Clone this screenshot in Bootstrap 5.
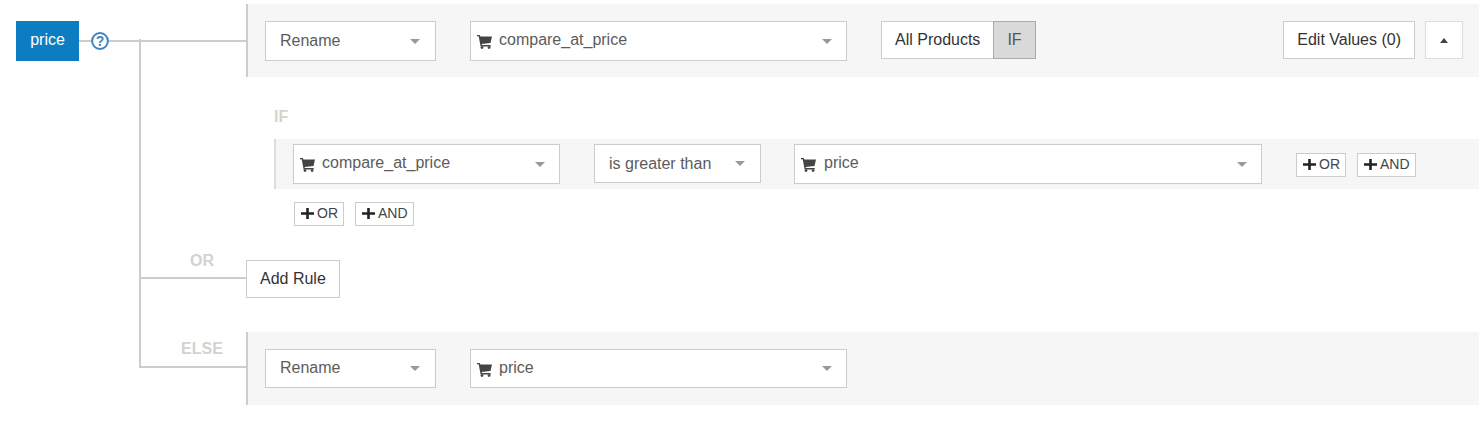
<!DOCTYPE html>
<html lang="en">
<head>
<meta charset="utf-8">
<title>Rule builder</title>
<link href="https://cdn.jsdelivr.net/npm/bootstrap@5.3.0/dist/css/bootstrap.min.css" rel="stylesheet">
<style>
html,body{height:427px;overflow:hidden;background:#fff}
body{font-family:"Liberation Sans",Arial,sans-serif;font-size:16px;color:#555}
.tree{position:relative;padding-top:4px}
.tree::before{content:"";position:absolute;left:139px;top:39px;width:2px;height:329px;background:#ccc}
.gutter{width:246px;flex:none}
.band{background:#f6f6f6;border-left:2px solid #ccc;flex:1 1 auto;min-width:0}
.top-band,.else-band{height:73px;padding:17px 16px 0 17px}
.head-cell{padding:17px 0 0 16px;height:57px}
.field-pill{width:63px;height:40px;background:#0d7dc1;color:#fff;line-height:38px;text-align:center}
.wire{height:2px;background:#ccc;flex:none}
.wire-a{width:12px}
.wire-b{flex:1 1 auto}
.help-mark{display:block;width:18px;height:18px;flex:none}
.pick{height:40px;background:#fff;border:1px solid #ccc;border-radius:0;padding:0 15px 0 14px;color:#5c5c5c;font-size:16px;line-height:1;text-align:left}
.pick:hover,.pick:active{background:#fff!important;color:#5c5c5c!important;border-color:#ccc!important}
.pick-icon{padding-left:6px;padding-right:14px;padding-bottom:2px}
.pick-short{height:39px}
.w171{width:171px}.w377{width:377px}.w267{width:267px}.w167{width:167px}.w468{width:468px}
.tri{display:block;width:0;height:0;border-left:5px solid transparent;border-right:5px solid transparent;border-top:5px solid #999;margin-left:auto;flex:none}
.pick-icon .tri{position:relative;top:1px}
.cart{display:block;width:15px;height:14px;margin:4px 7px 0 0;flex:none;fill:#444}
.cart-wide{margin-right:8px}
.act{height:38px;background:#fff;border:1px solid #ccc;border-radius:0;color:#333;font-size:16px;padding:0 13px;line-height:1}
.act.on{background:#d9d9d9;border-color:#aaa;color:#555}
.act:hover{background:#fff;color:#333;border-color:#ccc}
.act.on:hover{background:#d9d9d9;color:#555;border-color:#aaa}
.act-sq{width:38px;padding:0;margin-left:10px;border-color:#ddd}
.act-sq:hover{border-color:#ddd}
.tri-up{display:block;width:0;height:0;margin:0 auto;border-left:4.5px solid transparent;border-right:4.5px solid transparent;border-bottom:5px solid #444}
.gap-34{margin-left:34px}
.gap-33{margin-left:33px}
.cond{margin-left:274px;height:173px}
.if-label{height:62px;padding-top:30px;font-weight:700;color:#d4d4cb;line-height:20px}
.cond-band{height:50px;padding:5px 0 0 17px;border-left-color:#ddd}
.mini{height:24px;background:#fff;border:1px solid #ccc;border-radius:0;padding:0 5px 2px 6px;font-size:14px;line-height:1;color:#444}
.mini:hover{background:#fff;color:#444;border-color:#ccc}
.mini svg{display:block;width:13px;height:11px;margin:1px 3px 0 0;fill:#222}
.mini+.mini{margin-left:11px}
.mini-in{margin:9px 0 0 34px}
.mini-out{margin:13px 0 0 20px}
.or-row{height:48px}
.stub-or{margin-left:140px;height:29px;border-bottom:2px solid #ccc;width:106px;padding:1px 0 0 18px;text-align:center;color:#d2d2d2;font-weight:700;line-height:20px}
.add-rule{height:38px;background:#fff;border:1px solid #ccc;border-radius:0;padding:0 13px;color:#333;font-size:16px;line-height:1;margin-top:10px}
.add-rule:hover{background:#fff;color:#333;border-color:#ccc}
.else-row{margin-top:34px}
.else-band .pick{height:39px;padding-bottom:2px}
.else-band .tri{position:relative;top:1px}
.stub-else{margin-left:140px;height:36px;border-bottom:2px solid #ccc;width:106px;padding:7px 0 0 18px;text-align:center;color:#d2d2d2;font-weight:700;line-height:20px}
</style>
</head>
<body class="m-0">
<svg width="0" height="0" class="d-block position-absolute" aria-hidden="true">
  <symbol id="i-cart" viewBox="0 0 15 14"><path d="M0 0h2.8l.6 1.6H15l-1.5 6.3-8.9 1 .3 1.2h8.8v1.3H3.6L1.7 1.3H0z"/><circle cx="5" cy="12.6" r="1.4"/><circle cx="12.1" cy="12.6" r="1.4"/></symbol>
  <symbol id="i-plus" viewBox="0 0 13 11"><path d="M5.2 0h2.6v4.2H13v2.6H7.8V11H5.2V6.8H0V4.2h5.2z"/></symbol>
</svg>
<div class="tree">
  <div class="d-flex">
    <div class="gutter head-cell d-flex align-items-center">
      <div class="field-pill">price</div>
      <div class="wire wire-a"></div>
      <svg class="help-mark" viewBox="0 0 18 18" role="img" aria-label="Help"><circle cx="9" cy="9" r="7.9" fill="#fff" stroke="#3f81c1" stroke-width="2"/><text x="9" y="14" text-anchor="middle" font-family="Liberation Sans,sans-serif" font-weight="700" font-size="14" fill="#3f81c1">?</text></svg>
      <div class="wire wire-b"></div>
    </div>
    <div class="band top-band d-flex align-items-start">
      <button type="button" class="btn pick w171 d-flex align-items-center">Rename<span class="tri"></span></button>
      <button type="button" class="btn pick pick-icon w377 gap-34 d-flex align-items-center"><svg class="cart"><use href="#i-cart"/></svg>compare_at_price<span class="tri"></span></button>
      <div class="btn-group gap-34" role="group">
        <button type="button" class="btn act">All Products</button>
        <button type="button" class="btn act on">IF</button>
      </div>
      <button type="button" class="btn act ms-auto">Edit Values (0)</button>
      <button type="button" class="btn act act-sq"><span class="tri-up"></span></button>
    </div>
  </div>
  <div class="cond">
    <div class="if-label">IF</div>
    <div class="band cond-band d-flex align-items-start">
      <button type="button" class="btn pick pick-icon w267 d-flex align-items-center"><svg class="cart"><use href="#i-cart"/></svg>compare_at_price<span class="tri"></span></button>
      <button type="button" class="btn pick pick-short w167 gap-34 d-flex align-items-center">is greater than<span class="tri"></span></button>
      <button type="button" class="btn pick pick-icon w468 gap-33 d-flex align-items-center"><svg class="cart cart-wide"><use href="#i-cart"/></svg>price<span class="tri"></span></button>
      <div class="d-flex mini-in">
        <button type="button" class="btn mini d-flex align-items-center"><svg><use href="#i-plus"/></svg>OR</button>
        <button type="button" class="btn mini d-flex align-items-center"><svg><use href="#i-plus"/></svg>AND</button>
      </div>
    </div>
    <div class="d-flex mini-out">
      <button type="button" class="btn mini d-flex align-items-center"><svg><use href="#i-plus"/></svg>OR</button>
      <button type="button" class="btn mini d-flex align-items-center"><svg><use href="#i-plus"/></svg>AND</button>
    </div>
  </div>
  <div class="d-flex or-row">
    <div class="gutter"><div class="stub-or">OR</div></div>
    <div><button type="button" class="btn add-rule">Add Rule</button></div>
  </div>
  <div class="d-flex else-row">
    <div class="gutter"><div class="stub-else">ELSE</div></div>
    <div class="band else-band d-flex align-items-start">
      <button type="button" class="btn pick w171 d-flex align-items-center">Rename<span class="tri"></span></button>
      <button type="button" class="btn pick pick-icon w377 gap-34 d-flex align-items-center"><svg class="cart"><use href="#i-cart"/></svg>price<span class="tri"></span></button>
    </div>
  </div>
</div>
<script src="https://cdn.jsdelivr.net/npm/bootstrap@5.3.0/dist/js/bootstrap.bundle.min.js"></script>
</body>
</html>
